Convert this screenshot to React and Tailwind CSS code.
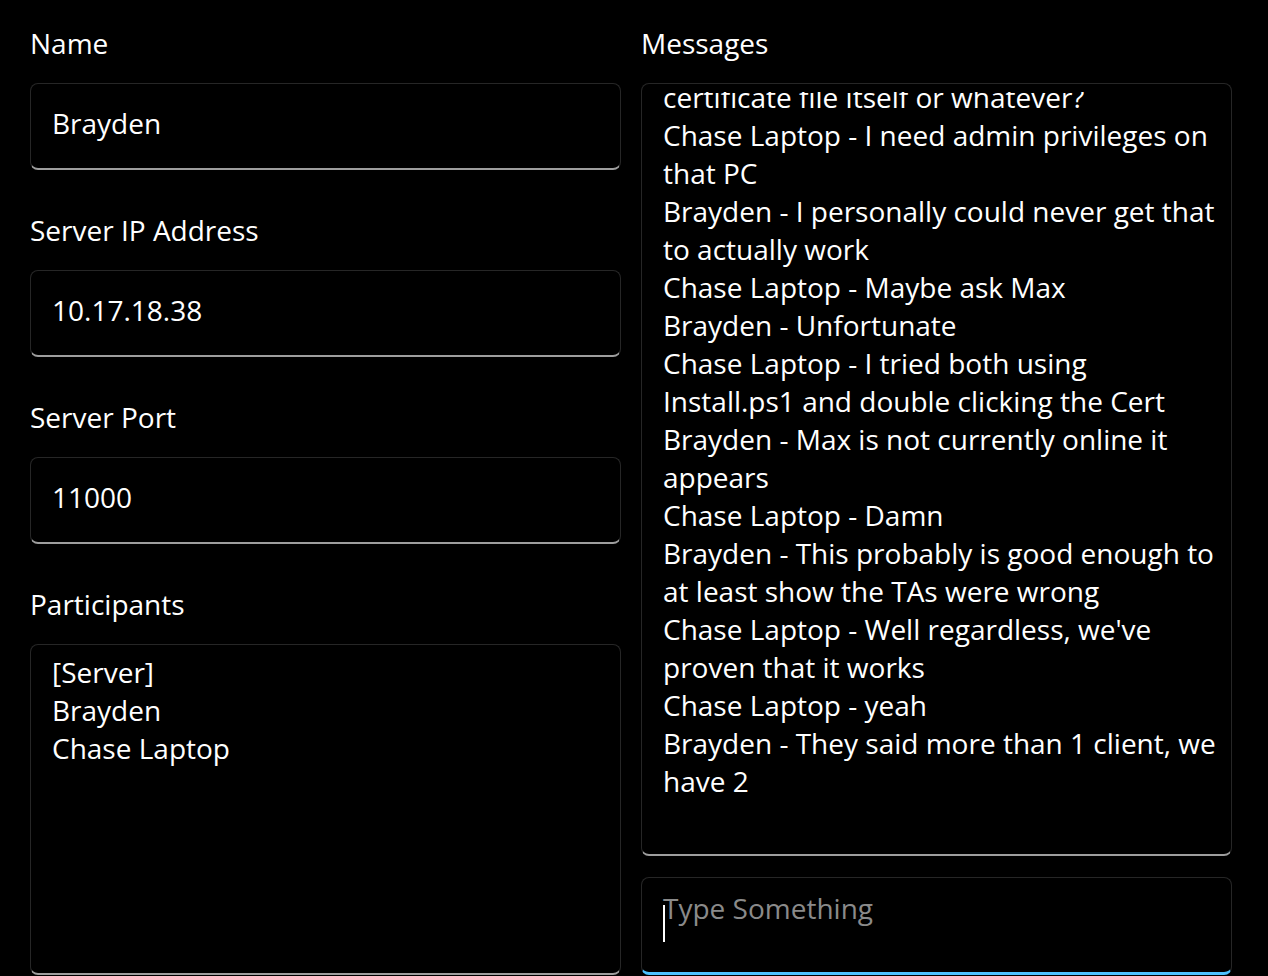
import React from 'react';

const messages = [
  ['certificate file itself or whatever?'],
  ['Chase Laptop - I need admin privileges on', 'that PC'],
  ['Brayden - I personally could never get that', 'to actually work'],
  ['Chase Laptop - Maybe ask Max'],
  ['Brayden - Unfortunate'],
  ['Chase Laptop - I tried both using', 'Install.ps1 and double clicking the Cert'],
  ['Brayden - Max is not currently online it', 'appears'],
  ['Chase Laptop - Damn'],
  ['Brayden - This probably is good enough to', 'at least show the TAs were wrong'],
  ["Chase Laptop - Well regardless, we've", 'proven that it works'],
  ['Chase Laptop - yeah'],
  ['Brayden - They said more than 1 client, we', 'have 2'],
];

const Field = ({ label, value }) => (
  <div className="mb-[41px]">
    <div className="h-[38px] leading-[38px]">{label}</div>
    <div className="mt-[21px] h-[87px] flex items-center rounded-lg border border-[#262626] border-b-2 border-b-[#9e9e9e] px-[21px] pb-[7px]">
      {value}
    </div>
  </div>
);

export default function App() {
  return (
    <div
      className="h-[976px] w-full overflow-hidden bg-black text-white text-[28px] leading-[38px]"
      style={{ fontFamily: '"Open Sans", sans-serif' }}
    >
      <div className="grid grid-cols-[591px_591px] gap-x-[20px] pl-[30px] pt-[24px] h-full">
        {/* left column */}
        <div className="flex flex-col h-full pb-[1px]">
          <Field label="Name" value="Brayden" />
          <Field label="Server IP Address" value="10.17.18.38" />
          <Field label="Server Port" value="11000" />
          <div className="h-[38px] leading-[38px]">Participants</div>
          <div className="mt-[21px] flex-1 rounded-lg border border-[#262626] border-b-2 border-b-[#9e9e9e] px-[21px] pt-[8px]">
            <div>[Server]</div>
            <div>Brayden</div>
            <div>Chase Laptop</div>
          </div>
        </div>

        {/* right column */}
        <div className="flex flex-col h-full pb-[1px]">
          <div className="h-[38px] leading-[38px]">Messages</div>
          <div className="mt-[21px] h-[773px] rounded-lg border border-[#262626] border-b-2 border-b-[#9e9e9e] pl-[21px] pr-[6px] pt-[8px]">
            <div className="h-full overflow-hidden">
              <div className="-mt-[14px]">
                {messages.map((m, i) => (
                  <div key={i}>
                    {m.map((line, j) => (
                      <div key={j} className="whitespace-nowrap">{line}</div>
                    ))}
                  </div>
                ))}
              </div>
            </div>
          </div>
          <div className="relative mt-[21px] flex-1 rounded-lg border border-[#262626] border-b-[3px] border-b-[#4cc2ff] px-[21px] pt-[11px]">
            <div className="text-[#8a8a8a]">Type Something</div>
            <div className="absolute left-[21px] top-[27px] h-[37px] w-[2px] bg-white" />
          </div>
        </div>
      </div>
    </div>
  );
}
